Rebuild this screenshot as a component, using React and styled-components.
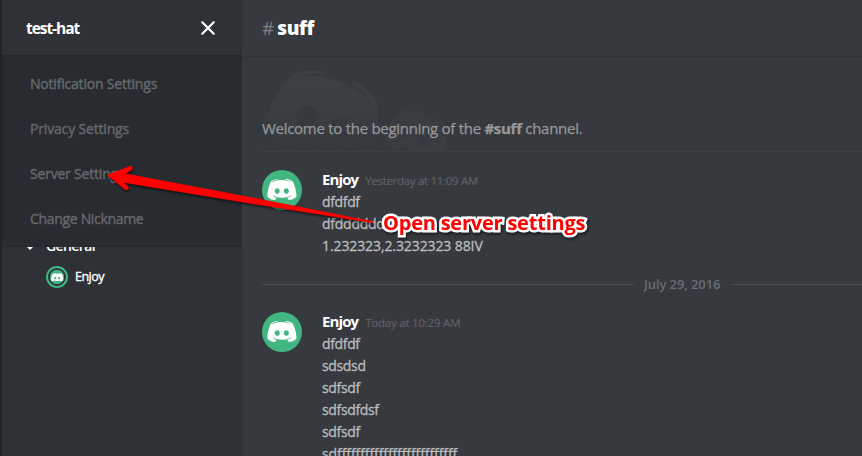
import React from 'react';
import styled, { createGlobalStyle } from 'styled-components';

const GlobalStyle = createGlobalStyle`
  * { box-sizing: border-box; }
  body {
    margin: 0;
    overflow: hidden;
    background: #36393e;
    font-family: "Open Sans", "Noto Sans", sans-serif;
  }
`;

const Window = styled.div`
  position: relative;
  display: flex;
  width: 862px;
  height: 456px;
  overflow: hidden;
  border-left: 2px solid #212427;
`;

const Sidebar = styled.aside`
  display: flex;
  flex-direction: column;
  flex: 0 0 240px;
  background: #2e3136;
`;

const ServerHeader = styled.header`
  display: flex;
  align-items: center;
  justify-content: space-between;
  flex: 0 0 57px;
  padding: 0 27px 0 24px;
  border-bottom: 2px solid #25282c;
  color: #fff;
`;

const ServerName = styled.h1`
  margin: 0;
  font-size: 15.5px;
  font-weight: 700;
  letter-spacing: -1.05px;
  line-height: 22px;
`;

const CloseIcon = styled.svg`
  width: 14px;
  height: 14px;
  margin-top: 1px;
`;

const Menu = styled.nav`
  display: flex;
  flex-direction: column;
  flex: 0 0 189px;
  padding: 4px 28px 5px;
  background: #282b30;
`;

const MenuItem = styled.a`
  height: 45px;
  font-size: 14px;
  line-height: 45px;
  letter-spacing: ${(p) => p.$spacing}px;
  -webkit-text-stroke: 0.4px #66696d;
  color: #66696d;
`;

const Category = styled.div`
  display: flex;
  flex: 0 0 10px;
  align-items: flex-end;
  gap: 12px;
  padding-left: 24px;
  overflow: hidden;
  border-top: 1px solid #25282c;
  color: #fff;
`;

const Caret = styled.svg`
  width: 8px;
  height: 9px;
`;

const CategoryName = styled.span`
  margin-bottom: 1px;
  font-size: 14px;
  font-weight: 600;
  line-height: 18px;
  letter-spacing: -0.6px;
`;

const VoiceUser = styled.div`
  display: flex;
  align-items: center;
  gap: 7px;
  margin-top: 10px;
  padding-left: 44px;
`;

const VoiceAvatar = styled.div`
  display: grid;
  place-items: center;
  width: 22px;
  height: 22px;
  border: 2px solid #43b581;
  border-radius: 50%;
  background: radial-gradient(circle, #43b581 0 6.8px, #2e3136 7.5px);
`;

const VoiceName = styled.span`
  font-size: 12.5px;
  letter-spacing: -0.5px;
  line-height: 20px;
  -webkit-text-stroke: 0.35px #fff;
  color: #fff;
`;

const Chat = styled.main`
  display: flex;
  flex-direction: column;
  flex: 1;
  min-width: 0;
`;

const ChannelHeader = styled.header`
  display: flex;
  align-items: center;
  gap: 3px;
  flex: 0 0 57px;
  padding: 0 20px;
  border-bottom: 1px solid #303338;
`;

const Hash = styled.span`
  font-size: 19px;
  font-weight: 400;
  color: #7c7f84;
`;

const ChannelName = styled.h2`
  margin: 0;
  font-size: 19px;
  font-weight: 800;
  letter-spacing: -0.4px;
  color: #fff;
`;

const Welcome = styled.section`
  position: relative;
  flex: 0 0 95px;
  margin-left: 20px;
  padding-top: 60px;
  border-bottom: 1px solid #3c3f44;
`;

const Watermark = styled.svg`
  position: absolute;
  top: 0;
  left: -10px;
  width: 210px;
  height: 94px;
`;

const WelcomeText = styled.p`
  position: relative;
  margin: 0;
  font-size: 15px;
  line-height: 22px;
  letter-spacing: -0.28px;
  white-space: nowrap;
  -webkit-text-stroke: 0.25px #97999b;
  color: #97999b;
`;

const Message = styled.article`
  display: flex;
  gap: 20px;
  padding: ${(p) => p.$top}px 0 0 20px;
`;

const Avatar = styled.div`
  display: grid;
  place-items: center;
  flex: 0 0 40px;
  height: 40px;
  border-radius: 50%;
  background: #43b581;
`;

const Logo = styled.svg`
  width: ${(p) => p.$width}px;
  height: ${(p) => p.$width * 0.715}px;
  fill: #fff;
`;

const MessageBody = styled.div`
  margin-top: -2px;
`;

const MessageHead = styled.div`
  display: flex;
  align-items: baseline;
  gap: 7px;
  height: 23px;
  line-height: 22px;
`;

const Author = styled.strong`
  font-size: 15px;
  font-weight: 700;
  letter-spacing: -0.9px;
  color: #fff;
`;

const Time = styled.time`
  font-size: 11.5px;
  letter-spacing: ${(p) => p.$spacing}px;
  -webkit-text-stroke: 0.2px #5e6166;
  color: #5e6166;
`;

const Line = styled.p`
  margin: 0;
  font-size: 14px;
  line-height: 22px;
  letter-spacing: ${(p) => p.$spacing}px;
  white-space: nowrap;
  -webkit-text-stroke: 0.3px #bcbdbf;
  color: #bcbdbf;
`;

const DateDivider = styled.div`
  display: flex;
  align-items: center;
  gap: 10px;
  height: 20px;
  margin: 18px 0 0 20px;
  font-size: 13px;
  font-weight: 600;
  letter-spacing: -0.1px;
  color: #676d74;

  &::before, &::after {
    content: "";
    height: 1px;
    background: #494c51;
  }
  &::before { flex: 0 0 372px; }
  &::after { flex: 1; }
`;

const Arrow = styled.svg`
  position: absolute;
  left: 98px;
  top: 159px;
  width: 280px;
  height: 70px;
  filter: drop-shadow(1px 2px 1px rgba(0, 0, 0, 0.55));
`;

const Callout = styled.div`
  position: absolute;
  left: 381px;
  top: 209px;
  font-size: 20px;
  font-weight: 700;
  line-height: 28px;
  letter-spacing: -0.22px;
  white-space: nowrap;
  color: #f00;
  -webkit-text-stroke: 5px #fff;
  paint-order: stroke fill;
  stroke-linejoin: round;
  filter: drop-shadow(1px 2px 1px rgba(0, 0, 0, 0.5));
`;

const LOGO_EYES =
  'M297.216 243.2c0 15.616-11.52 28.416-26.112 28.416-14.336 0-26.112-12.8-26.112-28.416s11.52-28.416 26.112-28.416c14.592 0 26.112 12.8 26.112 28.416zM177.664 214.784c-14.592 0-26.112 12.8-26.112 28.416s11.776 28.416 26.112 28.416c14.592 0 26.112-12.8 26.112-28.416.256-15.616-11.52-28.416-26.112-28.416z';
const LOGO_BODY =
  'M375.04 295.424c0-82.432-36.864-149.248-36.864-149.248-36.864-27.648-71.936-26.88-71.936-26.88l-3.584 4.096c43.52 13.312 63.744 32.512 63.744 32.512-60.811-33.329-132.244-33.335-191.232-7.424-9.472 4.352-15.104 7.424-15.104 7.424s21.248-20.224 67.328-33.536l-2.56-3.072s-35.072-.768-71.936 26.88c0 0-36.864 66.816-36.864 149.248 0 0 21.504 37.12 78.08 38.912 0 0 9.472-11.52 17.152-21.248-32.512-9.728-44.8-30.208-44.8-30.208 3.766 2.636 9.976 6.053 10.496 6.4 43.21 24.198 104.588 32.126 159.744 8.96 8.96-3.328 18.944-8.192 29.44-15.104 0 0-12.8 20.992-46.336 30.464 7.68 9.728 16.896 20.736 16.896 20.736 56.576-1.792 78.336-38.912 78.336-38.912z';
const LOGO = LOGO_BODY + LOGO_EYES;

const menuItems = [
  ['Notification Settings', -0.2],
  ['Privacy Settings', -0.17],
  ['Server Settings', -0.2],
  ['Change Nickname', -0.32],
];

const messages = [
  {
    time: 'Yesterday at 11:09 AM',
    timeSpacing: -0.3,
    lines: [['dfdfdf', -0.35], ['dfdddddddddddd', -0.25], ['1.232323,2.3232323 88IV', -0.1]],
  },
  {
    time: 'Today at 10:29 AM',
    timeSpacing: -0.22,
    lines: [
      ['dfdfdf', -0.35],
      ['sdsdsd', -0.35],
      ['sdfsdf', -0.35],
      ['sdfsdfdsf', -0.35],
      ['sdfsdf', -0.35],
      ['sdffffffffffffffffffffffffff', -0.09],
    ],
  },
];

function DiscordLogo({ width }) {
  return (
    <Logo $width={width} viewBox="73 119 302 216">
      <path fillRule="evenodd" d={LOGO} />
    </Logo>
  );
}

function MessageGroup({ message, top }) {
  return (
    <Message $top={top}>
      <Avatar><DiscordLogo width={29.5} /></Avatar>
      <MessageBody>
        <MessageHead>
          <Author>Enjoy</Author>
          <Time $spacing={message.timeSpacing}>{message.time}</Time>
        </MessageHead>
        {message.lines.map(([text, spacing], i) => (
          <Line key={i} $spacing={spacing}>{text}</Line>
        ))}
      </MessageBody>
    </Message>
  );
}

export default function App() {
  return (
    <>
      <GlobalStyle />
      <Window>
        <Sidebar>
          <ServerHeader>
            <ServerName>test-hat</ServerName>
            <CloseIcon viewBox="0 0 14 14">
              <path d="M1.3 1.3 12.7 12.7M12.7 1.3 1.3 12.7" stroke="#fff" strokeWidth="2.2" strokeLinecap="round" />
            </CloseIcon>
          </ServerHeader>
          <Menu>
            {menuItems.map(([label, spacing]) => (
              <MenuItem key={label} $spacing={spacing}>{label}</MenuItem>
            ))}
          </Menu>
          <Category>
            <Caret viewBox="0 0 8 9"><path d="M1 0H7L4 3Z" fill="#fff" /></Caret>
            <CategoryName>General</CategoryName>
          </Category>
          <VoiceUser>
            <VoiceAvatar><DiscordLogo width={12.5} /></VoiceAvatar>
            <VoiceName>Enjoy</VoiceName>
          </VoiceUser>
        </Sidebar>
        <Chat>
          <ChannelHeader>
            <Hash>#</Hash>
            <ChannelName>suff</ChannelName>
          </ChannelHeader>
          <Welcome>
            <Watermark viewBox="252 57 210 94">
              <defs>
                <linearGradient id="fade" gradientUnits="userSpaceOnUse" x1="0" y1="70" x2="0" y2="150">
                  <stop offset="0" stopColor="#3d4045" />
                  <stop offset="0.45" stopColor="#3b3e43" />
                  <stop offset="1" stopColor="#36393e" />
                </linearGradient>
                <mask id="big">
                  <path fill="#fff" fillRule="evenodd" transform="translate(323.5 121.500) rotate(18) scale(.38) translate(-224.4 -243.2)" d={LOGO} />
                </mask>
                <mask id="small">
                  <path fill="#fff" fillRule="evenodd" transform="translate(416.5 137) rotate(22) scale(.21) translate(-224.4 -243.2)" d={LOGO} />
                </mask>
              </defs>
              <rect x="252" y="57" width="210" height="94" fill="url(#fade)" mask="url(#big)" />
              <rect x="252" y="57" width="210" height="94" fill="#393c41" mask="url(#small)" />
            </Watermark>
            <WelcomeText>
              Welcome to the beginning of the <b>#suff</b> channel.
            </WelcomeText>
          </Welcome>
          <MessageGroup message={messages[0]} top={18} />
          <DateDivider>July 29, 2016</DateDivider>
          <MessageGroup message={messages[1]} top={19} />
        </Chat>
        <Arrow viewBox="100 160 280 70">
          <path
            d="M107 176 129.5 167.2Q132.500 166.500 132.800 169Q132.800 170.500 130.500 171.800L125.500 174.600 250 198 373 222.300 373 224 250 204.500 124 183.800 128 187.200Q129.500 189 128.300 190.300Q126.500 192 124.500 190.200Z"
            fill="#f00"
          />
        </Arrow>
        <Callout>Open server settings</Callout>
      </Window>
    </>
  );
}
